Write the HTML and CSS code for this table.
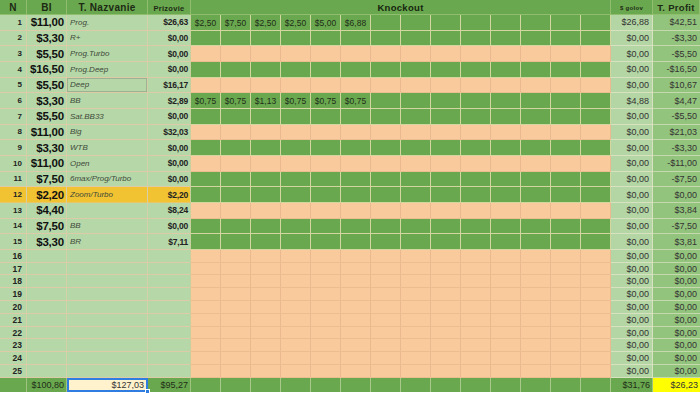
FILE: index.html
```html
<!DOCTYPE html>
<html>
<head>
<meta charset="utf-8">
<link rel="stylesheet" href="styles.css">
</head>
<body>
<div class="sheet">
  <div class="row hd">
    <div class="c h">N</div><div class="c h">BI</div><div class="c h">T. Nazvanie</div><div class="c h hs">Prizovie</div>
    <div class="ko kh">Knockout</div>
    <div class="c h hx">$ golov</div><div class="c h hp">T. Profit</div>
  </div>

  <div class="row big"><div class="c n">1</div><div class="c bi">$11,00</div><div class="c nm">Prog.</div><div class="c pz">$26,63</div>
    <div class="ko g vals"><span>$2,50</span><span>$7,50</span><span>$2,50</span><span>$2,50</span><span>$5,00</span><span>$6,88</span></div>
    <div class="c gl">$26,88</div><div class="c pf">$42,51</div></div>
  <div class="row big"><div class="c n">2</div><div class="c bi">$3,30</div><div class="c nm">R+</div><div class="c pz">$0,00</div><div class="ko g"></div><div class="c gl">$0,00</div><div class="c pf">-$3,30</div></div>
  <div class="row big"><div class="c n">3</div><div class="c bi">$5,50</div><div class="c nm">Prog.Turbo</div><div class="c pz">$0,00</div><div class="ko p"></div><div class="c gl">$0,00</div><div class="c pf">-$5,50</div></div>
  <div class="row big"><div class="c n">4</div><div class="c bi">$16,50</div><div class="c nm">Prog.Deep</div><div class="c pz">$0,00</div><div class="ko g"></div><div class="c gl">$0,00</div><div class="c pf">-$16,50</div></div>
  <div class="row big"><div class="c n">5</div><div class="c bi">$5,50</div><div class="c nm boxed">Deep</div><div class="c pz">$16,17</div><div class="ko p"></div><div class="c gl">$0,00</div><div class="c pf">$10,67</div></div>
  <div class="row big"><div class="c n">6</div><div class="c bi">$3,30</div><div class="c nm">BB</div><div class="c pz">$2,89</div>
    <div class="ko g vals"><span>$0,75</span><span>$0,75</span><span>$1,13</span><span>$0,75</span><span>$0,75</span><span>$0,75</span></div>
    <div class="c gl">$4,88</div><div class="c pf">$4,47</div></div>
  <div class="row big"><div class="c n">7</div><div class="c bi">$5,50</div><div class="c nm">Sat.BB33</div><div class="c pz">$0,00</div><div class="ko g"></div><div class="c gl">$0,00</div><div class="c pf">-$5,50</div></div>
  <div class="row big"><div class="c n">8</div><div class="c bi">$11,00</div><div class="c nm">Big</div><div class="c pz">$32,03</div><div class="ko p"></div><div class="c gl">$0,00</div><div class="c pf">$21,03</div></div>
  <div class="row big"><div class="c n">9</div><div class="c bi">$3,30</div><div class="c nm">WTB</div><div class="c pz">$0,00</div><div class="ko g"></div><div class="c gl">$0,00</div><div class="c pf">-$3,30</div></div>
  <div class="row big"><div class="c n">10</div><div class="c bi">$11,00</div><div class="c nm">Open</div><div class="c pz">$0,00</div><div class="ko p"></div><div class="c gl">$0,00</div><div class="c pf">-$11,00</div></div>
  <div class="row big"><div class="c n">11</div><div class="c bi">$7,50</div><div class="c nm">6max/Prog/Turbo</div><div class="c pz">$0,00</div><div class="ko g"></div><div class="c gl">$0,00</div><div class="c pf">-$7,50</div></div>
  <div class="row big hl"><div class="c n">12</div><div class="c bi">$2,20</div><div class="c nm">Zoom/Turbo</div><div class="c pz">$2,20</div><div class="ko g"></div><div class="c gl">$0,00</div><div class="c pf">$0,00</div></div>
  <div class="row big"><div class="c n">13</div><div class="c bi">$4,40</div><div class="c nm"></div><div class="c pz">$8,24</div><div class="ko p"></div><div class="c gl">$0,00</div><div class="c pf">$3,84</div></div>
  <div class="row big"><div class="c n">14</div><div class="c bi">$7,50</div><div class="c nm">BB</div><div class="c pz">$0,00</div><div class="ko g"></div><div class="c gl">$0,00</div><div class="c pf">-$7,50</div></div>
  <div class="row big"><div class="c n">15</div><div class="c bi">$3,30</div><div class="c nm">BR</div><div class="c pz">$7,11</div><div class="ko g"></div><div class="c gl">$0,00</div><div class="c pf">$3,81</div></div>

  <div class="row sm"><div class="c n">16</div><div class="c bi"></div><div class="c nm"></div><div class="c pz"></div><div class="ko p"></div><div class="c gl">$0,00</div><div class="c pf">$0,00</div></div>
  <div class="row sm"><div class="c n">17</div><div class="c bi"></div><div class="c nm"></div><div class="c pz"></div><div class="ko p"></div><div class="c gl">$0,00</div><div class="c pf">$0,00</div></div>
  <div class="row sm"><div class="c n">18</div><div class="c bi"></div><div class="c nm"></div><div class="c pz"></div><div class="ko p"></div><div class="c gl">$0,00</div><div class="c pf">$0,00</div></div>
  <div class="row sm"><div class="c n">19</div><div class="c bi"></div><div class="c nm"></div><div class="c pz"></div><div class="ko p"></div><div class="c gl">$0,00</div><div class="c pf">$0,00</div></div>
  <div class="row sm"><div class="c n">20</div><div class="c bi"></div><div class="c nm"></div><div class="c pz"></div><div class="ko p"></div><div class="c gl">$0,00</div><div class="c pf">$0,00</div></div>
  <div class="row sm"><div class="c n">21</div><div class="c bi"></div><div class="c nm"></div><div class="c pz"></div><div class="ko p"></div><div class="c gl">$0,00</div><div class="c pf">$0,00</div></div>
  <div class="row sm"><div class="c n">22</div><div class="c bi"></div><div class="c nm"></div><div class="c pz"></div><div class="ko p"></div><div class="c gl">$0,00</div><div class="c pf">$0,00</div></div>
  <div class="row sm"><div class="c n">23</div><div class="c bi"></div><div class="c nm"></div><div class="c pz"></div><div class="ko p"></div><div class="c gl">$0,00</div><div class="c pf">$0,00</div></div>
  <div class="row sm"><div class="c n">24</div><div class="c bi"></div><div class="c nm"></div><div class="c pz"></div><div class="ko p"></div><div class="c gl">$0,00</div><div class="c pf">$0,00</div></div>
  <div class="row sm"><div class="c n">25</div><div class="c bi"></div><div class="c nm"></div><div class="c pz"></div><div class="ko p"></div><div class="c gl">$0,00</div><div class="c pf">$0,00</div></div>

  <div class="row ft">
    <div class="c f"></div><div class="c f">$100,80</div>
    <div class="c f sel">$127,03<span class="handle"></span></div>
    <div class="c f">$95,27</div>
    <div class="ko g"></div>
    <div class="c f">$31,76</div><div class="c f yel">$26,23</div>
  </div>
</div>
</body>
</html>
```

FILE: styles.css
```css
* { box-sizing: border-box; }
html, body { margin: 0; padding: 0; background: #fff; }
body { width: 700px; height: 393px; overflow: hidden; font-family: "Liberation Sans", Arial, sans-serif; color: #222; }

.sheet { display: flex; flex-direction: column; width: 700px; }

.row {
  display: grid;
  grid-template-columns: 27px 40px 81px 43px 420px 42px 47px;
}
.row.hd { height: 15px; }
.row.big { height: 15.67px; }
.row.sm { height: 12.8px; }
.row.ft { height: 13px; }

.c {
  display: flex;
  align-items: center;
  overflow: visible;
  white-space: nowrap;
  background: #b6d7a8;
  border-right: 1px solid #d6d0a8;
  border-bottom: 1px solid #dccba6;
}

/* header */
.h {
  background: #6aa84f;
  justify-content: center;
  font-weight: bold;
  font-size: 10px;
  letter-spacing: 0.3px;
  color: #1c2a14;
  border-right: 1px solid #8fbf6e;
  border-bottom: 1px solid #8fbf6e;
}
.h.hs { font-size: 7.5px; padding-top: 2px; }
.h.hx { font-size: 6px; padding-top: 2px; }
.h.hp { background: #73ae57; font-size: 9.5px; }

.ko {
  background-color: #6aa84f;
  border-bottom: 1px solid #d3d79f;
  background-image: repeating-linear-gradient(to right, transparent 0 29px, #d3d79f 29px 30px);
}
.ko.p {
  background-color: #f9cb9c;
  border-bottom: 1px solid #edbd92;
  background-image: repeating-linear-gradient(to right, transparent 0 29px, #ebb990 29px 30px);
}
.ko.kh {
  background-image: none;
  display: flex;
  align-items: center;
  justify-content: center;
  font-weight: bold;
  font-size: 9.5px;
  letter-spacing: 0.3px;
  color: #15250e;
  border-bottom: 1px solid #8fbf6e;
  border-right: 1px solid #8fbf6e;
}
.ko.vals {
  display: grid;
  grid-template-columns: repeat(14, 30px);
  align-items: center;
}
.ko.vals span {
  text-align: center;
  font-size: 8.5px;
  color: #1e2e17;
  padding-right: 1px;
  padding-top: 1px;
}

.n {
  justify-content: flex-end;
  padding-right: 4px;
  font-weight: bold;
  font-size: 8px;
  color: #222;
}
.sm .n { font-size: 8.5px; }
.bi {
  justify-content: flex-end;
  padding-right: 2px;
  font-weight: bold;
  font-size: 11.5px;
  letter-spacing: -0.2px;
  color: #111;
}
.nm {
  padding-left: 3px;
  font-style: italic;
  font-size: 8px;
  color: #3e4a3a;
}
.nm.boxed { box-shadow: inset 0 0 0 1px #9db293; }
.pz {
  justify-content: flex-end;
  padding-right: 2px;
  font-weight: bold;
  font-size: 8.5px;
  letter-spacing: -0.2px;
  color: #222;
  border-right: 1px solid #c7cf9f;
}
.gl {
  justify-content: flex-end;
  padding-right: 3px;
  font-size: 9px;
  color: #333;
  background: #b3d6a4;
  border-right: 1px solid #d8e2c0;
  border-bottom: 1px solid #d8e2c0;
}
.pf {
  justify-content: flex-end;
  padding-right: 3px;
  font-size: 9px;
  color: #333;
  background: #93c47d;
  border-right: none;
  border-bottom: 1px solid #c6d9ac;
}

.hl .c { background: #f1c232; border-bottom-color: #e8c46a; }
.hl .gl { background: #b3d6a4; border-bottom-color: #d8e2c0; }
.hl .pf { background: #93c47d; border-bottom-color: #c6d9ac; }

/* footer */
.f {
  background: #6aa84f;
  justify-content: flex-end;
  padding-right: 2px;
  font-size: 9px;
  color: #1e2e17;
  border-right: 1px solid #9fc47f;
  border-bottom: none;
}
.f.sel {
  position: relative;
  background: #fff2cc;
  border: 2px solid #2f7de1;
  color: #333;
}
.handle {
  position: absolute;
  right: -4px;
  bottom: -4px;
  width: 5px;
  height: 5px;
  background: #2f7de1;
  border: 1px solid #fff;
}
.f.yel { background: #ffff00; border-right: none; color: #333; }
.ft .ko { border-bottom: none; background-image: repeating-linear-gradient(to right, transparent 0 29px, #a9c98a 29px 30px); }
```
